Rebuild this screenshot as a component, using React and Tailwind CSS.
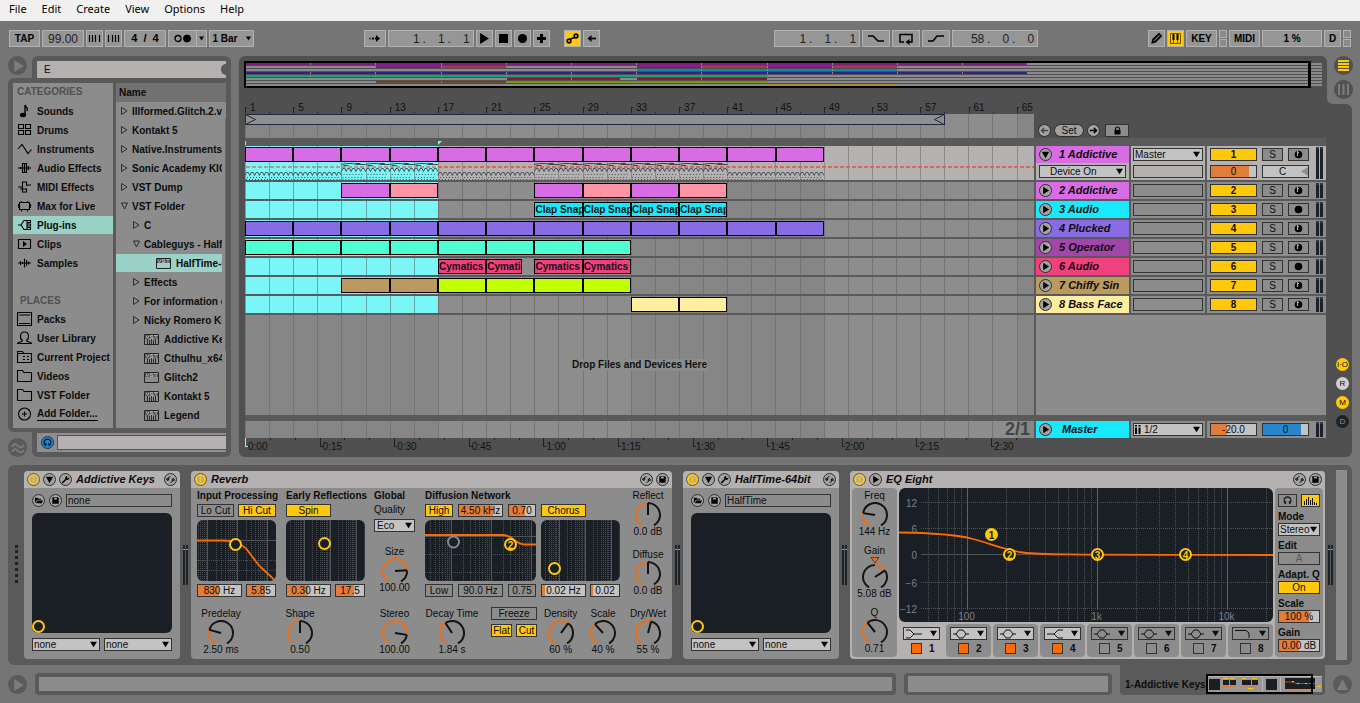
import { clsx } from 'clsx';

const BARS = 65.42;
const OVERVIEW_BARS = 66;

const COLORS = {
  magenta: { clip: '#d86ce4', mini: '#7e1c86' },
  pink: { clip: '#ff94a6', mini: '#a83a42' },
  cyan: { clip: '#19e9ff', mini: '#0a86a8' },
  purple: { clip: '#886ce4', mini: '#32208c' },
  green: { clip: '#4dffd2', mini: '#12a578' },
  red: { clip: '#f23f7e', mini: '#a00c38' },
  brown: { clip: '#bb9a60', mini: '#70451a' },
  lime: { clip: '#bfff00', mini: '#68a010' },
  yellow: { clip: '#ffeda0', mini: '#aa8c38' },
};

// n clips of four bars each, starting at the given bar
const run = (start, n, color, name) =>
  Array.from({ length: n }, (_, i) => ({ start: start + i * 4, len: 4, color, name }));

const TRACKS = [
  { name: '1 Addictive', header: '#d86ce4', open: true, clips: run(1, 12, 'magenta') },
  {
    name: '2 Addictive',
    header: '#d86ce4',
    clips: [
      ...run(9, 1, 'magenta'),
      ...run(13, 1, 'pink'),
      ...run(25, 1, 'magenta'),
      ...run(29, 1, 'pink'),
      ...run(33, 1, 'magenta'),
      ...run(37, 1, 'pink'),
    ],
  },
  { name: '3 Audio', header: '#19e9ff', audio: true, clips: run(25, 4, 'cyan', 'Clap Snap') },
  { name: '4 Plucked', header: '#8a6ce2', clips: run(1, 12, 'purple') },
  { name: '5 Operator', header: '#a346aa', clips: run(1, 8, 'green') },
  {
    name: '6 Audio',
    header: '#f23f7e',
    audio: true,
    clips: [
      ...run(17, 1, 'red', 'Cymatics'),
      { start: 21, len: 3, color: 'red', name: 'Cymatics' },
      ...run(25, 2, 'red', 'Cymatics'),
    ],
  },
  { name: '7 Chiffy Sin', header: '#bb9a60', clips: [...run(9, 2, 'brown'), ...run(17, 4, 'lime')] },
  { name: '8 Bass Face', header: '#ffeda0', clips: run(33, 2, 'yellow') },
];

const pct = (bars, total = BARS) => `${(bars / total) * 100}%`;

// fills the holes between clips so that a lane can be laid out in one row
const withGaps = (clips) => {
  const out = [];
  let at = 1;
  clips.forEach((c) => {
    if (c.start > at) out.push({ gap: true, len: c.start - at });
    out.push(c);
    at = c.start + c.len;
  });
  return out;
};

/* ---------- small controls ---------- */

function Tri({ dir = 'down', className = 'w-2 h-2' }) {
  const d = { down: 'M0 1h10l-5 8z', right: 'M1 0v10l8-5z' }[dir];
  return (
    <svg viewBox="0 0 10 10" className={className} fill="currentColor" aria-hidden="true">
      <path d={d} />
    </svg>
  );
}

function Pill({ on, className, children, ...rest }) {
  return (
    <button
      type="button"
      className={clsx(
        'h-[13px] shrink-0 border border-[#333] flex items-center justify-center leading-none whitespace-nowrap overflow-hidden',
        on ? 'bg-[#ffc80a]' : 'bg-[#8c8c8c]',
        className
      )}
      {...rest}
    >
      {children}
    </button>
  );
}

function Value({ value, fill = 0, label, className, color = '#e07d3a', rest = '#c3c3c3' }) {
  return (
    <input
      type="text"
      aria-label={label}
      defaultValue={value}
      className={clsx('h-[13px] min-w-0 shrink-0 border border-[#333] text-center leading-none outline-none', className)}
      style={{ background: `linear-gradient(to right, ${color} ${fill}%, ${rest} ${fill}%)` }}
    />
  );
}

function Drop({ options, label, className, pad = 'pl-1' }) {
  return (
    <span className={clsx('relative block h-[13px] shrink-0', className)}>
      <select
        aria-label={label}
        className={clsx('appearance-none block w-full h-full border border-[#333] bg-[#c3c3c3] leading-none outline-none', pad)}
      >
        {options.map((o) => (
          <option key={o}>{o}</option>
        ))}
      </select>
      <Tri className="w-[7px] h-[7px] absolute right-[3px] top-[3px] pointer-events-none text-black" />
    </span>
  );
}

function Round({ label, on, children }) {
  return (
    <button
      type="button"
      aria-label={label}
      className={clsx(
        'size-[13px] shrink-0 rounded-full border flex items-center justify-center text-black',
        on ? 'bg-[#ffc80a] border-[#555]' : 'bg-[#a5a2a2] border-[#2c2c2c]'
      )}
    >
      {children}
    </button>
  );
}

function Glyph({ name }) {
  const shapes = {
    power: (
      <>
        <circle cx="6" cy="6" r="3.8" fill="#b3aa98" />
        <path d="M6 3v6" stroke="#ffc80a" strokeWidth="1.6" />
      </>
    ),
    down: <path d="M2 3h8L6 10z" fill="currentColor" />,
    right: <path d="M3.5 2v8L10 6z" fill="currentColor" />,
    wrench: (
      <path d="M1.800 9.200l4-4c-.6-1.800.6-3.400 2.600-3.400L7.300 3.300l1.300 1.300 1.700-1c.3 2-1.500 3.300-3.300 2.700l-3.900 4z" fill="currentColor" />
    ),
    swap: (
      <path
        d="M3 5.500C3.300 3.800 4.500 3 6 3M9 6.500C8.700 8.200 7.500 9 6 9M1.500 5.300h3L3 7.300zM7.500 6.700h3L9 4.700z"
        fill="none"
        stroke="currentColor"
        strokeWidth="1"
      />
    ),
    save: (
      <>
        <path d="M2.500 2.500h6l1 1v6h-7z" fill="currentColor" />
        <path d="M4.500 3h3v2h-3z" fill="#a5a2a2" />
      </>
    ),
    folder: <path d="M2 3h3l1 1h3v1.200H4.200L2.600 8.500H2zM4.600 5.900H11L9.500 9H3.200z" fill="currentColor" />,
    left: <path d="M10 6H3M5.500 3.200L2.800 6l2.700 2.800" fill="none" stroke="#444" strokeWidth="1.5" />,
    next: <path d="M2 6h7M6.500 3.200L9.200 6 6.500 8.800" fill="none" stroke="currentColor" strokeWidth="1.7" />,
  };
  return (
    <svg viewBox="0 0 12 12" className="w-[11px] h-[11px] shrink-0" aria-hidden="true">
      {shapes[name]}
    </svg>
  );
}

const polar = (deg, r) => {
  const a = (deg * Math.PI) / 180;
  return `${(Math.sin(a) * r).toFixed(2)} ${(-Math.cos(a) * r).toFixed(2)}`;
};

const arc = (from, to, r) => `M${polar(from, r)}A${r} ${r} 0 ${to - from > 180 ? 1 : 0} 1 ${polar(to, r)}`;

function Knob({ label, value, at, bipolar }) {
  const deg = -150 + at * 300;
  return (
    <label className="flex flex-col items-center whitespace-nowrap">
      <span className="leading-3">{label}</span>
      {bipolar && (
        <svg viewBox="0 0 10 7" className="w-[10px] h-[7px]" aria-hidden="true">
          <path d="M1 .5h8L5 6z" fill="#ff6a00" stroke="#333" strokeWidth=".8" />
        </svg>
      )}
      <span className="relative block">
        <svg viewBox="-13 -13 26 24" className="block w-[26px] h-6" fill="none" strokeWidth="2" aria-hidden="true">
          <path d={arc(deg, 150, 12)} stroke="#151515" />
          {bipolar && <path d={arc(-150, 0, 12)} stroke="#151515" />}
          <path d={arc(bipolar ? 0 : -150, deg, 12)} stroke="#e8701a" />
          <path d={`M0 0L${polar(deg, 12)}`} stroke="#111" />
        </svg>
        <input
          type="range"
          min="0"
          max="100"
          defaultValue={at * 100}
          aria-label={label}
          className="absolute inset-0 w-full h-full opacity-0"
        />
      </span>
      <span className="leading-3">{value}</span>
    </label>
  );
}

/* ---------- transport ---------- */

const CTL = 'h-[17px] shrink-0 border border-[#b2b2b2] bg-[#969696] flex items-center justify-center font-bold text-black leading-none';

function Ctl({ className, children, ...rest }) {
  return (
    <button type="button" className={clsx(CTL, className)} {...rest}>
      {children}
    </button>
  );
}

function Icon({ w = 17, h = 15, children }) {
  return (
    <svg width={w} height={h} viewBox={`0 0 ${w} ${h}`} fill="none" stroke="#000" aria-hidden="true" className="shrink-0">
      {children}
    </svg>
  );
}

function Position({ label, parts }) {
  return (
    <div className="h-[17px] w-[86px] shrink-0 border border-[#b2b2b2] bg-[#969696] flex items-center justify-end pr-[3px] text-xs text-[#222]">
      {parts.map((p, i) => (
        <span key={i} className="flex items-center">
          <input type="text" aria-label={`${label} ${i + 1}`} defaultValue={p} className="w-4 h-[15px] text-right outline-none" />
          {i < 2 && <span className="w-[9px] text-center">.</span>}
        </span>
      ))}
    </div>
  );
}

function MidiLights() {
  return (
    <span className="flex flex-col gap-px shrink-0">
      <i className="block size-2 border border-[#b2b2b2] bg-[#8a8a8a]" />
      <i className="block size-2 border border-[#b2b2b2] bg-[#8a8a8a]" />
    </span>
  );
}

function Transport() {
  return (
    <div className="h-[35px] shrink-0 flex items-center px-[9px]">
      <div className="flex gap-0.5">
        <Ctl className="w-[31px]">TAP</Ctl>
        <input
          type="text"
          aria-label="Tempo"
          defaultValue="99.00"
          className="h-[17px] w-[42px] border border-[#b2b2b2] bg-[#969696] text-xs text-center text-[#222] outline-none"
        />
        <Ctl className="w-[17px]" aria-label="Nudge down">
          <Icon><path d="M3.500 4v7M6.500 4v7M9.500 4v7M13.500 4v7" strokeWidth="1.2" /></Icon>
        </Ctl>
        <Ctl className="w-[17px]" aria-label="Nudge up">
          <Icon><path d="M3.500 4v7M7.500 4v7M10.500 4v7M13.500 4v7" strokeWidth="1.2" /></Icon>
        </Ctl>
        <Ctl className="w-[42px] gap-1.5 text-[11px]">
          <span>4</span>
          <span>/</span>
          <span>4</span>
        </Ctl>
        <div className="flex">
          <Ctl className="w-[29px]" aria-label="Metronome">
            <Icon w={20}>
              <circle cx="5" cy="7.5" r="3" strokeWidth="1.3" />
              <circle cx="14" cy="7.5" r="3.5" fill="#000" />
            </Icon>
          </Ctl>
          <Ctl className="w-[10px] border-l-0" aria-label="Metronome settings"><Tri className="w-[5px] h-[5px]" /></Ctl>
        </div>
        <Ctl className="w-[45px] gap-2">1 Bar <Tri className="w-[5px] h-[5px]" /></Ctl>
      </div>

      <div className="flex-[110]" />

      <div className="flex gap-0.5">
        <Ctl className="w-[22px]" aria-label="Follow">
          <Icon w={16}>
            <path d="M2 7.500h2" stroke="#444" strokeWidth="2" />
            <path d="M5 7.500h5" strokeWidth="2" strokeDasharray="2 1" />
            <path d="M9 4v7l4-3.500z" fill="#000" stroke="none" />
          </Icon>
        </Ctl>
        <Position label="Position" parts={['1', '1', '1']} />
        <Ctl className="w-[17px]" aria-label="Play"><Tri dir="right" className="w-[11px] h-[11px]" /></Ctl>
        <Ctl className="w-[17px]" aria-label="Stop"><i className="block size-[9px] bg-black" /></Ctl>
        <Ctl className="w-[17px]" aria-label="Record"><i className="block size-[9px] rounded-full bg-black" /></Ctl>
        <Ctl className="w-[17px]" aria-label="Overdub">
          <Icon w={15}><path d="M7.500 3v9M3 7.500h9" strokeWidth="3" /></Icon>
        </Ctl>
        <button type="button" aria-label="Automation arm" className="ml-3 h-[17px] w-[17px] border border-[#b2b2b2] bg-[#ffc80a]">
          <Icon w={15}>
            <circle cx="4" cy="10" r="1.8" strokeWidth="1.7" />
            <circle cx="11" cy="5" r="1.8" strokeWidth="1.7" />
            <path d="M5.500 8l4-1.500" strokeWidth="1.7" />
          </Icon>
        </button>
        <Ctl className="w-[17px]" aria-label="Back to arrangement">
          <Icon w={15}>
            <path d="M12 7.500H6" strokeWidth="1.7" />
            <path d="M7.500 4v7L3.500 7.500z" fill="#000" stroke="none" />
          </Icon>
        </Ctl>
      </div>

      <div className="flex-[175]" />

      <div className="flex gap-0.5">
        <Position label="Loop start" parts={['1', '1', '1']} />
        <Ctl className="w-7" aria-label="Punch in">
          <Icon w={18}><path d="M1 5h5l5 5h6" strokeWidth="1.6" /></Icon>
        </Ctl>
        <Ctl className="w-7" aria-label="Loop">
          <Icon w={18}>
            <path d="M7 11H3V3.500h12V11h-4" strokeWidth="1.5" />
            <path d="M12.500 8v6L8.500 11z" fill="#000" stroke="none" />
          </Icon>
        </Ctl>
        <Ctl className="w-7" aria-label="Punch out">
          <Icon w={18}><path d="M1 10h5l4-5h7" strokeWidth="1.6" /></Icon>
        </Ctl>
        <Position label="Loop length" parts={['58', '0', '0']} />
      </div>

      <div className="flex-[110]" />

      <div className="flex gap-0.5">
        <Ctl className="w-[17px]" aria-label="Draw mode">
          <Icon w={15}>
            <path d="M3 12l1-4 6-5.500 2.500 2.500-6 6z" strokeWidth="1.2" fill="#222" />
            <path d="M5.500 9.500l5-5" stroke="#969696" strokeWidth=".8" />
          </Icon>
        </Ctl>
        <button type="button" aria-label="Computer keyboard" className="h-[17px] w-[17px] border border-[#b2b2b2] bg-[#ffc80a]">
          <Icon w={15}>
            <path d="M2.500 2.500h10v10h-10zM5.500 8v4M9.500 8v4" stroke="#6d5600" />
            <path d="M5.500 3v6M9.500 3v6" strokeWidth="2" />
          </Icon>
        </button>
        <Ctl className="w-[31px]">KEY</Ctl>
        <MidiLights />
        <Ctl className="w-[31px]">MIDI</Ctl>
        <div className={clsx(CTL, 'w-[60px]')}>1 %</div>
        <div className={clsx(CTL, 'w-[17px]')}>D</div>
        <MidiLights />
      </div>
    </div>
  );
}

/* ---------- browser ---------- */

const CATEGORIES = ['Sounds', 'Drums', 'Instruments', 'Audio Effects', 'MIDI Effects', 'Max for Live', 'Plug-ins', 'Clips', 'Samples'];
const PLACES = ['Packs', 'User Library', 'Current Project', 'Videos', 'VST Folder', 'Add Folder...'];

const FOLDER = 'M1.500 2.500v11h14v-9h-7.500l-1.500-2z';

const BROWSER_ICONS = {
  Sounds: (
    <>
      <ellipse cx="7" cy="12" rx="2.5" ry="1.8" fill="#000" />
      <path d="M9 12V2c1 3 4 3 2 6" strokeWidth="1.4" />
    </>
  ),
  Drums: <path d="M2.500 2.500h5v4h-5zM9.500 2.500h5v4h-5zM2.500 8.500h5v4h-5zM9.500 8.500h5v4h-5z" />,
  Instruments: <path d="M2 8l4-4.500 6 9 3.500-4" />,
  'Audio Effects': <path d="M2 8h13M4.500 7v2M6.500 5v6M8.500 4v8M10.500 5v6M12.500 6v4M6.500 5V3.500h4V5M6.500 11v1.500h4V11" />,
  'MIDI Effects': <path d="M2 8h5M10 6h5M4 10h7M10.500 9.500v3.500h-4V3h4v4" />,
  'Max for Live': <path d="M3.500 4.500h10v7h-10zM2.500 6v4M14.500 6v4M5.500 11.500v2M11.500 11.500v2M5.500 3v1.500M11.500 3v1.500" />,
  'Plug-ins': <path d="M2 8h3l3-4.500h3v9H8L5 8M11.500 3.500h3v2h-3M11.500 7h3v2h-3M11.500 10.500h3v2h-3" />,
  Clips: (
    <>
      <path d="M2.500 3.500h12v9h-12z" />
      <path d="M7 5v6l4-3z" fill="#000" stroke="none" />
    </>
  ),
  Samples: <path d="M2 8h13M4.500 6v4M6.500 7v2M8.500 3.500v9M10.500 5v6M12.500 6.500v3" />,
  Packs: <path d="M1.500 1.500h14v13h-14zM3 4h11M3 12.500h11" />,
  'User Library': <path d="M1.500 13.500c0-2 5-1 5-3-3-2-3-8.500 2-8.500s5 6.500 2 8.500c0 2 5 1 5 3z" />,
  'Current Project': <path d={`${FOLDER}M7 7.500h2M11 7.500h2M7 10.500h2M11 10.500h2M1.500 4.500h7`} />,
  Videos: <path d={FOLDER} />,
  'VST Folder': <path d={FOLDER} />,
  'Add Folder...': <path d="M8.500 2a6 6 0 100 12 6 6 0 000-12zM6 8h5M8.500 5.500v5" />,
};

function SideItem({ name, active }) {
  return (
    <li>
      <button
        type="button"
        className={clsx('h-[18px] mb-px w-full flex items-center gap-1 pl-[3px] text-left font-bold', active && 'bg-[#9ad2c8]')}
      >
        <svg viewBox="0 0 17 16" className="w-[17px] h-4 shrink-0" fill="none" stroke="#000" strokeWidth="1.1" aria-hidden="true">
          {BROWSER_ICONS[name]}
        </svg>
        <span className={clsx('whitespace-nowrap', name === 'Add Folder...' && 'border-b border-black leading-3')}>{name}</span>
      </button>
    </li>
  );
}

const FILES = [
  { name: 'Illformed.Glitch.2.v2', kind: 'closed', depth: 0 },
  { name: 'Kontakt 5', kind: 'closed', depth: 0 },
  { name: 'Native.Instruments.K', kind: 'closed', depth: 0 },
  { name: 'Sonic Academy KICK', kind: 'closed', depth: 0 },
  { name: 'VST Dump', kind: 'closed', depth: 0 },
  { name: 'VST Folder', kind: 'open', depth: 0 },
  { name: 'C', kind: 'closed', depth: 1 },
  { name: 'Cableguys - HalfTime', kind: 'open', depth: 1 },
  { name: 'HalfTime-64bit', kind: 'vst', depth: 3, active: true },
  { name: 'Effects', kind: 'closed', depth: 1 },
  { name: 'For information on', kind: 'closed', depth: 1 },
  { name: 'Nicky Romero Kick', kind: 'closed', depth: 1 },
  { name: 'Addictive Keys', kind: 'vsti', depth: 2 },
  { name: 'Cthulhu_x64', kind: 'vsti', depth: 2 },
  { name: 'Glitch2', kind: 'vst', depth: 2 },
  { name: 'Kontakt 5', kind: 'vsti', depth: 2 },
  { name: 'Legend', kind: 'vsti', depth: 2 },
];

const INDENT = ['pl-[5px] gap-1', 'pl-[17px] gap-1', 'pl-[28px] gap-[5px]', 'pl-[40px] gap-[5px]'];

function FileIcon({ kind }) {
  if (kind === 'closed' || kind === 'open') {
    return (
      <svg viewBox="0 0 7 8" className="w-[7px] h-2 shrink-0" fill="none" stroke="#222" strokeWidth=".9" aria-hidden="true">
        <path d={kind === 'closed' ? 'M.5.5v7L6 4z' : 'M.5 1h6L3.500 7z'} />
      </svg>
    );
  }
  return (
    <svg viewBox="0 0 15 11" className="w-[15px] h-[11px] shrink-0" fill="none" stroke="#222" aria-hidden="true">
      <path d="M.5.5h14v10H.5z" />
      <path d="M1 1h13v4H1z" fill="#555" stroke="none" />
      <path d="M2 1.500l1.500 3L5 1.500M9 1.500H6.500V3H9v1.500H6M10 1.500h4M12 1.500v3.500" strokeWidth=".9" stroke="#b0b0b0" />
      {kind === 'vsti' && <path d="M3.500 5v5M5.500 6v4M7.500 5v5M9.500 6v4M11.500 5v5" strokeWidth=".9" />}
    </svg>
  );
}

function Browser() {
  return (
    <aside className="w-[223px] shrink-0 flex flex-col">
      <div className="flex h-[22px]">
        <div className="w-6 shrink-0">
          <button type="button" aria-label="Hide browser" className="size-[19px] rounded-full bg-[#5a5a5a] text-[#7c7c7c] flex items-center justify-center">
            <Tri dir="right" className="w-3 h-3 ml-0.5" />
          </button>
        </div>
        <div className="flex-1 bg-[#5a5a5a] rounded-t-md pt-[5px] px-[5px] relative overflow-hidden">
          <input type="text" aria-label="Search" defaultValue="E" className="block w-full h-[17px] bg-[#b5b1b0] px-[7px] outline-none" />
          <span className="absolute right-[5px] top-[8px] w-[5px] h-[11px] rounded-l-full bg-[#5a5a5a]" />
        </div>
      </div>

      <div className="flex-1 bg-[#5a5a5a] rounded-l-md pl-[5px] pr-[5px] pt-[5px] pb-1 flex gap-[3px]">
        <nav className="w-[100px] shrink-0 bg-[#8c8c8c]">
          <h2 className="h-[19px] pl-1 leading-[18px] font-bold text-[#505050]">CATEGORIES</h2>
          <ul>
            {CATEGORIES.map((c) => (
              <SideItem key={c} name={c} active={c === 'Plug-ins'} />
            ))}
          </ul>
          <h2 className="h-[19px] mt-[19px] pl-[7px] leading-[19px] font-bold text-[#505050]">PLACES</h2>
          <ul>
            {PLACES.map((p) => (
              <SideItem key={p} name={p} />
            ))}
          </ul>
        </nav>
        <div className="flex-1 min-w-0 bg-[#8c8c8c]">
          <h2 className="h-[19px] pl-[3px] leading-[19px] font-bold bg-[#73716f]">Name</h2>
          <div className="flex">
            <ul className="flex-1 min-w-0 overflow-hidden">
              {FILES.map((f, i) => (
                <li key={i}>
                  <button
                    type="button"
                    className={clsx('h-[18px] mb-px w-full flex items-center text-left font-bold whitespace-nowrap overflow-hidden', INDENT[f.depth], f.active && 'bg-[#9ad2c8]')}
                  >
                    <FileIcon kind={f.kind} />
                    {f.name}
                  </button>
                </li>
              ))}
            </ul>
            <div className="w-1 flex justify-end pt-4">
              <i className="block w-px h-[233px] bg-[#6a6a6a]" />
            </div>
          </div>
        </div>
      </div>

      <div className="flex h-[25px]">
        <div className="w-6 shrink-0 pt-[6px]">
          <button type="button" aria-label="Groove pool" className="size-[19px] rounded-full bg-[#5a5a5a] flex items-center justify-center">
            <svg viewBox="0 0 14 12" className="w-[14px] h-3" fill="none" stroke="#7c7c7c" strokeWidth="1.8" aria-hidden="true">
              <path d="M1 5c2-4 4-3 6-1s4 2 6-1M1 10c2-4 4-3 6-1s4 2 6-1" />
            </svg>
          </button>
        </div>
        <div className="flex-1 bg-[#5a5a5a] rounded-b-md pt-px px-[5px] pb-[5px]">
          <div className="h-[19px] bg-[#8e8e8e] flex items-center gap-[3px] pl-1">
            <button type="button" aria-label="Preview" className="size-[13px] rounded-full bg-[#2a86cc] border border-[#123a5a]">
              <svg viewBox="0 0 11 11" className="size-[11px]" fill="none" stroke="#0d1c2a" strokeWidth="1.3" aria-hidden="true">
                <path d="M3.500 8.500C1 6 2 2.200 5.500 2.200S10 6 7.500 8.500M4 6v3M7 6v3" />
              </svg>
            </button>
            <div className="flex-1 h-[15px] border border-r-0 border-[#555] bg-[#b5b1b0]" />
          </div>
        </div>
      </div>
    </aside>
  );
}

/* ---------- arrangement ---------- */

function Grid({ selected, light }) {
  return (
    <div className="flex overflow-hidden min-w-0">
      {Array.from({ length: 33 }, (_, i) => {
        const shade = Math.floor(i / 8) % 2 ? '#8d8d8d' : '#868686';
        const on = selected && i < 8;
        return (
          <div
            key={i}
            className={clsx('shrink-0 border-l', on ? 'border-[#62a9a9]' : light ? 'border-[#8c8988]' : 'border-[#747474]')}
            style={{ width: pct(2), background: on ? '#7af6f6' : light ? '#b5b1b0' : shade }}
          />
        );
      })}
    </div>
  );
}

function Clips({ clips }) {
  return (
    <div className="flex h-[15px] mt-px min-w-0 overflow-hidden">
      {withGaps(clips).map((c, i) =>
        c.gap ? (
          <div key={i} className="shrink-0" style={{ width: pct(c.len) }} />
        ) : (
          <div
            key={i}
            className="shrink-0 h-[15px] border border-black font-bold leading-[13px] overflow-hidden whitespace-nowrap text-[#111]"
            style={{ width: pct(c.len), background: COLORS[c.color].clip }}
          >
            {c.name}
          </div>
        )
      )}
    </div>
  );
}

function Automation() {
  const bar = 12.06;
  const waves = [];
  const dots = [];
  const tops = [];
  for (let b = 0; b < 48; b += 2) {
    const x = b * bar;
    const busy = (b >= 8 && b < 16) || (b >= 24 && b < 40);
    waves.push(`M${x} ${busy ? 9.5 : 13.5}${'l1.400 -3h2l1.400 3'.repeat(5)}`);
    dots.push(`M${x + 1} 17.500h23`);
    dots.push(busy ? `M${x + 2} 12.500h20M${x + 1} 15.500h20` : `M${x + 2} 15.500h20`);
    if (busy) tops.push(`M${x} 2.500l5-1h6l4 1h9M${x + 2} 3.500h5M${x + 14} 1.500h5`);
  }
  return (
    <svg viewBox="0 0 789 18" preserveAspectRatio="none" className="block w-full h-[18px]" fill="none" aria-hidden="true">
      <path d="M1 5h192" stroke="#b8958f" strokeWidth="2" strokeDasharray="4 2" />
      <path d="M193 5h596" stroke="#d5675f" strokeWidth="2" strokeDasharray="4 2" />
      <path d={waves.join('')} stroke="#45525c" strokeWidth="1" />
      <path d={tops.join('')} stroke="#3c4650" strokeWidth="1" />
      <path d={dots.join('')} stroke="#45525c" strokeWidth="1" strokeDasharray="1 2" />
    </svg>
  );
}

function Meter() {
  return (
    <span className="flex gap-px self-stretch py-px ml-[7px]">
      <i className="block w-[3px] bg-[#1b2229] border-t-2 border-[#333c44]" />
      <i className="block w-[3px] bg-[#1b2229] border-t-2 border-[#333c44]" />
    </span>
  );
}

function TrackRow({ track, n }) {
  const bg = track.open ? 'bg-[#b5b1b0]' : 'bg-[#8c8c8c]';
  return (
    <div className="flex gap-0.5">
      <div className="flex-1 min-w-0 grid *:col-start-1 *:row-start-1">
        <Grid selected light={track.open} />
        <div className="min-w-0">
          <Clips clips={track.clips} />
          {track.open && <Automation />}
        </div>
      </div>
      <div className={clsx('w-[93px] shrink-0', bg)}>
        <div className="h-[17px] flex items-center gap-[7px] pl-[3px] text-[11px] font-bold italic" style={{ background: track.header }}>
          <Round label={track.open ? 'Fold track' : 'Unfold track'}>
            <Glyph name={track.open ? 'down' : 'right'} />
          </Round>
          <span className="whitespace-nowrap">{track.name}</span>
        </div>
        {track.open && <Drop className="mt-0.5 mx-[3px]" label="Automation device" options={['Device On']} pad="pl-[10px]" />}
      </div>
      <div className={clsx('w-[74px] shrink-0 px-0.5 py-0.5 flex flex-col gap-1', bg)}>
        {track.open ? (
          <>
            <Drop label="Output" options={['Master']} pad="pl-px" />
            <div className="h-[13px] border border-[#333] bg-[#b5b1b0]" />
          </>
        ) : (
          <div className="h-[13px] border border-[#333]" />
        )}
      </div>
      <div className={clsx('w-[119px] shrink-0 flex pl-[3px]', bg)}>
        <div className="flex flex-col gap-1 py-0.5">
          <div className="flex gap-[5px]">
            <Pill on className="w-[47px] font-bold">{n}</Pill>
            <Pill className="w-[21px]">S</Pill>
            <Pill className="w-[21px]" aria-label="Arm">
              <svg viewBox="0 0 9 9" className="size-[9px]" aria-hidden="true">
                <circle cx="4.5" cy="4.5" r="3.8" />
                {!track.audio && <path d="M3.500 1v5M3.500 2.500h1.500" stroke="#aaa" strokeWidth="1.2" />}
              </svg>
            </Pill>
          </div>
          {track.open && (
            <div className="flex gap-[5px]">
              <Value label="Volume" value="0" fill={84} className="w-[47px]" />
              <span className="relative block h-[13px]">
                <Value label="Pan" value="C" className="block w-[47px] pr-1.5" />
                <svg viewBox="0 0 7 9" className="absolute right-px top-0.5 w-[7px] h-[9px] pointer-events-none" aria-hidden="true">
                  <path d="M7 0v9L0 4.500z" fill="#8f8f8f" />
                </svg>
              </span>
            </div>
          )}
        </div>
        <Meter />
      </div>
    </div>
  );
}

function Overview() {
  return (
    <div className="relative h-[27px] -ml-px mr-1">
      <div className="h-full p-0.5 pr-0 flex flex-col gap-px">
        {TRACKS.map((t) => (
          <div key={t.name} className="h-0.5 flex bg-[#8a8a8a]">
            {withGaps(t.clips).map((c, i) => (
              <div
                key={i}
                className={clsx('shrink-0 h-0.5', !c.gap && 'border-r border-[#8a8a8a]')}
                style={{ width: pct(c.len, OVERVIEW_BARS), background: c.gap ? undefined : COLORS[c.color].mini }}
              />
            ))}
          </div>
        ))}
      </div>
      <div className="absolute inset-y-0 left-0 right-[11px] border-2 border-r-[3px] border-black" />
    </div>
  );
}

function BarRuler() {
  return (
    <div className="h-[26px] flex items-end overflow-hidden text-[#111]">
      {Array.from({ length: 17 }, (_, i) => (
        <div key={i} className="shrink-0 flex items-end" style={{ width: pct(4) }}>
          <div className="w-1/2 h-3 relative">
            <i className="absolute left-0 bottom-px w-[2px] h-[6px] border-l border-t border-[#222]" />
            <span className="block pl-[5px] leading-3">{i * 4 + 1}</span>
          </div>
          <i className="block w-px h-px mb-px bg-[#222]" />
        </div>
      ))}
    </div>
  );
}

const TIMES = ['0:00', '0:15', '0:30', '0:45', '1:00', '1:15', '1:30', '1:45', '2:00', '2:15', '2:30'];

function TimeRuler() {
  return (
    <div className="h-[19px] flex overflow-hidden text-[#111]">
      {TIMES.map((t, i) => (
        <div key={t} className="shrink-0 flex" style={{ width: pct(6.1875) }}>
          <div className="w-1/3 flex">
            <i className={clsx('block w-[3px] h-[9px] border-l border-b', i === 0 ? 'border-[#7af6f6]' : 'border-[#222]')} />
            <span className="leading-3 pt-[3px] whitespace-nowrap">{t}</span>
          </div>
          <i className="block w-1/3 h-0.5 border-l border-[#222]" />
          <i className="block w-1/3 h-0.5 border-l border-[#222]" />
        </div>
      ))}
    </div>
  );
}

function ViewToggle({ children, className }) {
  return (
    <button type="button" className={clsx('size-[13px] rounded-full text-[8px] leading-none flex items-center justify-center', className)}>
      {children}
    </button>
  );
}

function Arrangement() {
  return (
    <main className="flex-1 min-w-0 flex">
      <section className="flex-1 min-w-0 flex flex-col bg-[#505050] rounded-l-md rounded-tr-md pt-[5px] pl-1.5 pr-px">
        <Overview />
        <div className="flex gap-0.5">
          <div className="flex-1 min-w-0">
            <BarRuler />
            <div className="grid *:col-start-1 *:row-start-1 h-6">
              <Grid />
              <div className="h-[11px] border border-[#22263a] bg-[#8f8f8f] flex items-center justify-between" style={{ width: pct(58) }}>
                <svg viewBox="0 0 10 9" className="w-[10px] h-[9px]" fill="none" stroke="#22263a" aria-hidden="true"><path d="M.5 0l9 4.500-9 4.500" /></svg>
                <svg viewBox="0 0 10 9" className="w-[10px] h-[9px]" fill="none" stroke="#22263a" aria-hidden="true"><path d="M9.500 0l-9 4.500 9 4.500" /></svg>
              </div>
            </div>
          </div>
          <div className="w-[290px] shrink-0 flex items-end gap-[3px] pl-0.5 pb-px">
            <Round label="Previous locator"><Glyph name="left" /></Round>
            <button type="button" className="h-[13px] w-[30px] rounded-full border border-[#2c2c2c] bg-[#a0a0a0] leading-none">Set</button>
            <Round label="Next locator"><Glyph name="next" /></Round>
            <Pill className="w-6 ml-0.5" aria-label="Lock envelopes">
              <svg viewBox="0 0 9 9" className="size-[9px]" fill="none" stroke="#000" aria-hidden="true">
                <path d="M2.500 4.500V3a2 2 0 014 0v1.500" strokeWidth="1.2" />
                <path d="M1.500 4h6v4.500h-6z" fill="#000" stroke="none" />
              </svg>
            </Pill>
          </div>
        </div>

        <div className="bg-[#5a5a5a] flex-1 flex flex-col">
          <div className="flex h-2 items-end pb-px">
            <div className="h-1 flex-1 flex min-w-0 mr-[292px]">
              <i className="block shrink-0 h-1 border-l border-[#7af6f6]" style={{ width: pct(16) }} />
              <svg viewBox="0 0 4 4" className="size-1" aria-hidden="true"><path d="M0 0h4L0 4z" fill="#7af6f6" /></svg>
            </div>
          </div>
          <div className="flex-1 flex flex-col gap-0.5">
            {TRACKS.map((t, i) => (
              <TrackRow key={t.name} track={t} n={i + 1} />
            ))}
            <div className="flex-1 min-h-[100px] flex gap-0.5">
              <div className="flex-1 min-w-0 grid *:col-start-1 *:row-start-1">
                <Grid />
                <p className="place-self-center bg-[#8d8d8d] font-bold leading-3 text-[#111]">Drop Files and Devices Here</p>
              </div>
              <div className="w-[290px] shrink-0 bg-[#8c8c8c]" />
            </div>
          </div>

          <div className="mt-1.5 flex gap-0.5">
            <div className="flex-1 min-w-0 h-[17px] grid *:col-start-1 *:row-start-1">
              <Grid />
              <span className="justify-self-end pr-1 text-lg leading-[17px] font-bold text-[#444]">2/1</span>
            </div>
            <div className="w-[93px] shrink-0 bg-[#19e9ff] flex items-center gap-[10px] pl-[3px] text-[11px] font-bold italic">
              <Round label="Unfold master"><Glyph name="right" /></Round>
              Master
            </div>
            <div className="w-[74px] shrink-0 p-0.5 bg-[#8c8c8c] relative">
              <Drop label="Master output" options={['1/2']} pad="pl-[10px]" />
              <svg viewBox="0 0 6 9" className="absolute left-1 top-1 w-1.5 h-[9px] pointer-events-none" aria-hidden="true">
                <path d="M0 0h2v1.500H0zM3.500 0h2v1.500h-2zM0 2.500h2V9H0zM3.500 2.500h2V9h-2z" />
              </svg>
            </div>
            <div className="w-[119px] shrink-0 pl-[3px] bg-[#8c8c8c] flex items-center">
              <Value label="Master volume" value="-20.0" fill={35} className="w-[47px] mr-[5px]" />
              <Value label="Cue volume" value="0" fill={84} color="#2a86cc" className="w-[47px]" />
              <Meter />
            </div>
          </div>
        </div>
        <div className="mr-[292px]"><TimeRuler /></div>
      </section>

      <div className="w-[25px] shrink-0 flex flex-col">
        <div className="bg-[#505050]">
          <div className="h-12 bg-[#757575] rounded-bl-md pl-[7px] flex flex-col gap-[5px]">
            <button type="button" aria-label="Arrangement view" className="size-[19px] shrink-0 rounded-full bg-[#505050] flex items-center justify-center">
              <svg viewBox="0 0 11 11" className="size-[11px]" stroke="#ffc80a" strokeWidth="2" aria-hidden="true"><path d="M0 1h11M0 4h11M0 7h11M0 10h11" /></svg>
            </button>
            <button type="button" aria-label="Session view" className="size-[19px] shrink-0 rounded-full bg-[#505050] flex items-center justify-center">
              <svg viewBox="0 0 11 11" className="size-[11px]" stroke="#7c7c7c" strokeWidth="2" aria-hidden="true"><path d="M1 0v11M5.500 0v11M10 0v11" /></svg>
            </button>
          </div>
        </div>
        <div className="flex-1 bg-[#505050] rounded-r-md flex flex-col items-center justify-end gap-1.5 pb-[29px] pl-[6px]">
          <ViewToggle className="bg-[#ffc80a]">I·O</ViewToggle>
          <ViewToggle className="bg-[#d0d0d0]">R</ViewToggle>
          <ViewToggle className="bg-[#ffc80a]">M</ViewToggle>
          <ViewToggle className="bg-[#1b2229] text-[#8c8c8c]">D</ViewToggle>
        </div>
      </div>
    </main>
  );
}

/* ---------- devices ---------- */

function DeviceHeader({ title, icons, right }) {
  return (
    <header className="h-[17px] px-[3px] flex items-center gap-[3px] bg-[#b5b1b0] rounded-t">
      <Round label={`${title} on`} on><Glyph name="power" /></Round>
      {icons.map((g) => (
        <Round key={g} label={g}><Glyph name={g} /></Round>
      ))}
      <h3 className="flex-1 pl-px text-[11px] font-bold italic whitespace-nowrap">{title}</h3>
      {right.map((g) => (
        <Round key={g} label={g}><Glyph name={g} /></Round>
      ))}
    </header>
  );
}

function ChainMeter() {
  return (
    <div className="w-[11px] shrink-0 flex justify-center gap-px pt-[74px]">
      {[0, 1].map((i) => (
        <i key={i} className="w-0.5 h-10 flex flex-col pt-1 bg-[#1b2229]">
          <b className="block h-px bg-[#9a9a9a]" />
        </i>
      ))}
    </div>
  );
}

function PluginDevice({ title, preset }) {
  return (
    <section className="w-[156px] h-[188px] shrink-0 bg-[#8c8c8c] rounded">
      <DeviceHeader title={title} icons={['down', 'wrench']} right={['swap']} />
      <div className="px-2 pt-1.5">
        <div className="flex items-center gap-1">
          <Round label="Load preset"><Glyph name="folder" /></Round>
          <Round label="Save preset"><Glyph name="save" /></Round>
          <input type="text" aria-label="Preset" defaultValue={preset} className="flex-1 min-w-0 h-[13px] border border-[#333] pl-px leading-none outline-none" />
        </div>
        <div className="mt-1.5 h-[120px] rounded-md bg-[#1a1f26] flex items-end">
          <i className="block size-[13px] rounded-full border-2 border-[#ffc80a]" />
        </div>
        <div className="mt-[5px] flex gap-1">
          <Drop className="flex-1" label="X parameter" options={['none']} pad="pl-px" />
          <Drop className="flex-1" label="Y parameter" options={['none']} pad="pl-px" />
        </div>
      </div>
    </section>
  );
}

function Node({ x, y, n, solid, color = '#ffc80a' }) {
  return (
    <g>
      <circle cx={x} cy={y} r="5.5" fill={solid ? color : '#1a1f26'} stroke={color} strokeWidth="2" />
      {n && (
        <text x={x} y={y + 4} textAnchor="middle" fontSize="10" fontWeight="bold" fill={solid ? '#1a1f26' : color}>
          {n}
        </text>
      )}
    </g>
  );
}

function FilterChart({ w, solids, pitch, rows = [], solidRow, curve, children }) {
  const minor = [];
  [solids[0] - pitch, ...solids].forEach((s) => {
    for (let k = 2; k < 10; k++) {
      const x = Math.round(s + pitch * Math.log10(k));
      if (x > 0 && x < w) minor.push(x);
    }
  });
  return (
    <svg viewBox={`0 0 ${w} 61`} width={w} height="61" className="block mt-[3px] rounded-md bg-[#1a1f26] shrink-0" fill="none" aria-hidden="true">
      <path d={minor.map((x) => `M${x + 0.5} 0v61`).join('')} stroke="#4a4e53" strokeDasharray="1 1" />
      <path d={rows.map((y) => `M0 ${y + 0.5}h${w}`).join('')} stroke="#4a4e53" strokeDasharray="1 1" />
      <path d={solids.map((x) => `M${x + 0.5} 0v61`).join('')} stroke="#50555a" />
      {solidRow && <path d={`M0 ${solidRow + 0.5}h${w}`} stroke="#50555a" />}
      {curve && <path d={curve} stroke="#ff6a00" strokeWidth="1.8" />}
      {children}
    </svg>
  );
}

function Reverb() {
  return (
    <section className="w-[481px] h-[188px] shrink-0 bg-[#8c8c8c] rounded">
      <DeviceHeader title="Reverb" icons={[]} right={['swap', 'save']} />
      <div className="flex pl-1.5 pt-0.5 pr-0.5">
        <div className="w-[79px] shrink-0">
          <h4 className="font-bold leading-3 whitespace-nowrap">Input Processing</h4>
          <div className="mt-0.5 flex justify-between">
            <Pill className="w-[37px]">Lo Cut</Pill>
            <Pill on className="w-[38px]">Hi Cut</Pill>
          </div>
          <FilterChart w={79} solids={[10, 40, 70]} pitch={30} rows={[40, 50]} solidRow={20} curve="M0 20.500h26c14 0 17 3 23 8l13 17 15 14">
            <Node x={38.5} y={24.5} />
          </FilterChart>
          <div className="mt-[3px] flex justify-between">
            <Value label="Input frequency" value="830 Hz" fill={50} className="w-[45px]" />
            <Value label="Input width" value="5.85" fill={63} className="w-[30px]" />
          </div>
          <div className="mt-[11px] w-12"><Knob label="Predelay" value="2.50 ms" at={0.25} /></div>
        </div>

        <div className="w-[79px] shrink-0 ml-[10px]">
          <h4 className="font-bold leading-3 whitespace-nowrap">Early Reflections</h4>
          <div className="mt-0.5"><Pill on className="w-[45px]">Spin</Pill></div>
          <FilterChart w={79} solids={[18, 44, 70]} pitch={26}>
            <Node x={38.5} y={23.5} />
          </FilterChart>
          <div className="mt-[3px] flex justify-between">
            <Value label="Spin rate" value="0.30 Hz" fill={48} className="w-[45px]" />
            <Value label="Spin amount" value="17.5" fill={63} className="w-[30px]" />
          </div>
          <div className="mt-[11px] w-7"><Knob label="Shape" value="0.50" at={0.5} /></div>
        </div>

        <div className="w-[41px] shrink-0 ml-[9px]">
          <h4 className="font-bold leading-3">Global</h4>
          <label className="block">
            <span className="block mt-0.5 mb-[3px] leading-3">Quality</span>
            <Drop label="Quality" options={['Eco']} pad="pl-0.5" />
          </label>
          <div className="mt-[14px]"><Knob label="Size" value="100.00" at={0.79} /></div>
          <div className="mt-[14px]"><Knob label="Stereo" value="100.00" at={0.83} /></div>
        </div>

        <div className="w-[195px] shrink-0 ml-[10px]">
          <div className="flex gap-[5px]">
            <div className="w-[111px] shrink-0">
              <h4 className="font-bold leading-3">Diffusion Network</h4>
              <div className="mt-0.5 flex justify-between">
                <Pill on className="w-7">High</Pill>
                <Value label="High frequency" value="4.50 kHz" fill={80} className="w-[45px]" />
                <Value label="High shape" value="0.70" fill={62} className="w-7" />
              </div>
              <FilterChart w={111} solids={[26, 66, 106]} pitch={40} rows={[34, 52]} solidRow={16} curve="M0 15h78c10 0 12 9.500 22 9.500h11">
                <Node x={28.5} y={22} color="#7d8a97" />
                <Node x={85.5} y={24.5} n="2" />
              </FilterChart>
              <div className="mt-[3px] flex justify-between">
                <Pill className="w-7">Low</Pill>
                <Value label="Low frequency" value="90.0 Hz" rest="#8c8c8c" className="w-[45px]" />
                <Value label="Low shape" value="0.75" rest="#8c8c8c" className="w-7" />
              </div>
            </div>
            <div className="w-[79px] shrink-0 pt-[14px]">
              <Pill on className="w-[45px]">Chorus</Pill>
              <FilterChart w={79} solids={[18, 44, 70]} pitch={26}>
                <Node x={13.5} y={48.5} />
              </FilterChart>
              <div className="mt-[3px] flex justify-between">
                <Value label="Chorus rate" value="0.02 Hz" fill={8} className="w-[45px]" />
                <Value label="Chorus amount" value="0.02" fill={8} className="w-[30px]" />
              </div>
            </div>
          </div>
          <div className="flex mt-[10px]">
            <div className="w-[54px] pt-px shrink-0"><Knob label="Decay Time" value="1.84 s" at={0.39} /></div>
            <div className="w-[46px] ml-3 shrink-0">
              <Pill className="w-[46px]">Freeze</Pill>
              <div className="mt-1 flex justify-between">
                <Pill on className="w-[21px]">Flat</Pill>
                <Pill on className="w-[21px]">Cut</Pill>
              </div>
            </div>
            <div className="flex-1 flex justify-between pt-px pl-[7px] pr-1">
              <Knob label="Density" value="60 %" at={0.62} />
              <Knob label="Scale" value="40 %" at={0.36} />
            </div>
          </div>
        </div>

        <div className="flex-1 flex flex-col gap-[11px] pl-1.5">
          <Knob label="Reflect" value="0.0 dB" at={0.5} />
          <Knob label="Diffuse" value="0.0 dB" at={0.5} />
          <Knob label="Dry/Wet" value="55 %" at={0.55} />
        </div>
      </div>
    </section>
  );
}

const BELL = 'M0 5h3l3-4h4l3 4-3 4H6L3 5M13 5h3';

const BANDS = [
  { on: true, shape: 'M0 1h4l4 4h8M0 9h4l4-4' },
  { on: true, shape: BELL },
  { on: true, shape: BELL },
  { on: true, shape: 'M0 5h7l4-4h5M7 5l4 4h5' },
  { shape: BELL },
  { shape: BELL },
  { shape: BELL },
  { shape: 'M0 1.500h11l3 2.500v5' },
];

function EqDisplay() {
  const fx = (f) => Math.round(68 + 130 * Math.log10(f / 100)) + 0.5;
  const minor = [];
  [10, 100, 1000, 10000].forEach((d) => {
    for (let k = 2; k < 10; k++) {
      const x = fx(d * k);
      if (x > 24 && x < 374) minor.push(`M${x} 0v134`);
    }
  });
  const rows = [
    ['12', 14.5],
    ['6', 40.5],
    ['0', 66.5],
    ['−6', 94.5],
    ['−12', 120.5],
  ];
  return (
    <svg viewBox="0 0 374 134" width="374" height="134" className="block rounded-md bg-[#1a1f26]" fill="none" role="img" aria-label="EQ curve">
      <path d={minor.join('')} stroke="#4d5257" strokeDasharray="1 1" />
      {rows.map(([t, y]) => (
        <g key={t}>
          <path d={`M22 ${y}h352`} stroke="#4d5257" strokeDasharray={t === '0' ? undefined : '1 1'} />
          <text x="18" y={y + 4} textAnchor="end" fontSize="10" fill="#7b8086">{t}</text>
        </g>
      ))}
      {[['100', 100], ['1k', 1000], ['10k', 10000]].map(([t, f]) => (
        <g key={t}>
          <path d={`M${fx(f)} 0v122`} stroke="#5c6166" />
          <text x={fx(f) - 1} y="132" textAnchor="middle" fontSize="10" fill="#7b8086">{t}</text>
        </g>
      ))}
      <path d="M0 44.500C30 44.800 55 46 74 51S105 62 124 64.500 170 66.700 374 67" stroke="#ff6a00" strokeWidth="1.8" />
      <Node x={92.5} y={46.5} n="1" solid />
      <Node x={110.5} y={66.5} n="2" />
      <Node x={198.5} y={66.5} n="3" />
      <Node x={286.5} y={66.5} n="4" />
    </svg>
  );
}

function EqEight() {
  return (
    <section className="w-[475px] h-[188px] shrink-0 bg-[#b5b1b0] rounded">
      <DeviceHeader title="EQ Eight" icons={['right']} right={['swap', 'save']} />
      <div className="flex gap-0.5 px-0.5">
        <div className="w-[45px] shrink-0 h-[169px] rounded bg-[#8c8c8c] pt-0.5 flex flex-col gap-[7px]">
          <Knob label="Freq" value="144 Hz" at={0.23} />
          <Knob label="Gain" value="5.08 dB" at={0.69} bipolar />
          <Knob label="Q" value="0.71" at={0.37} />
        </div>
        <div className="w-[374px] shrink-0">
          <EqDisplay />
          <div className="mt-0.5 flex gap-0.5">
            {BANDS.map((b, i) => (
              <div key={i} className={clsx('w-[45px] h-[33px] rounded px-1 pt-[3px]', i > 0 && 'bg-[#8c8c8c]')}>
                <span className="relative block">
                  <select
                    aria-label={`Band ${i + 1} filter type`}
                    className={clsx('appearance-none block w-[37px] h-[13px] border border-[#333]', b.on ? 'bg-[#c3c3c3]' : 'bg-[#8c8c8c]')}
                  />
                  <svg viewBox="0 0 16 10" className="absolute left-[3px] top-[2px] w-4 h-[10px] pointer-events-none" fill="none" stroke="#111" aria-hidden="true">
                    <path d={b.shape} />
                  </svg>
                  <Tri className="w-[7px] h-[7px] absolute right-[3px] top-[3px] pointer-events-none" />
                </span>
                <label className="mt-[3px] pl-2 flex items-center gap-[7px] font-bold leading-[11px]">
                  <input
                    type="checkbox"
                    defaultChecked={b.on}
                    className="appearance-none size-[11px] shrink-0 border border-[#333] checked:bg-[#ff6a00]"
                  />
                  {i + 1}
                </label>
              </div>
            ))}
          </div>
        </div>
        <div className="flex-1 h-[169px] rounded bg-[#8c8c8c] px-[3px] pt-[6px] flex flex-col gap-1">
          <div className="flex justify-between">
            <Pill className="w-[19px]" aria-label="Audition">
              <svg viewBox="0 0 11 11" className="size-[11px]" fill="none" stroke="#222" strokeWidth="1.3" aria-hidden="true">
                <path d="M3.500 9C1 6 2 2 5.500 2S10 6 7.500 9M3.500 6v3M7.500 6v3" />
              </svg>
            </Pill>
            <Pill on className="w-[19px]" aria-label="Analyze">
              <svg viewBox="0 0 15 9" className="w-[15px] h-[9px]" stroke="#111" aria-hidden="true">
                <path d="M1.500 5v4M3.500 3v6M5.500 1v8M7.500 4v5M9.500 2v7M11.500 6v3M13.500 7v2" />
              </svg>
            </Pill>
          </div>
          <div>
            <p className="font-bold leading-3">Mode</p>
            <Drop label="Mode" options={['Stereo']} pad="pl-px" />
          </div>
          <div>
            <p className="font-bold leading-3">Edit</p>
            <Pill className="w-[42px] text-[#5a5a5a]">A</Pill>
          </div>
          <div>
            <p className="font-bold leading-3 whitespace-nowrap">Adapt. Q</p>
            <Pill on className="w-[42px]">On</Pill>
          </div>
          <label className="block">
            <span className="block font-bold leading-3">Scale</span>
            <Value label="Scale" value="100 %" fill={74} className="block w-[42px]" />
          </label>
          <label className="block">
            <span className="block font-bold leading-3">Gain</span>
            <Value label="Gain" value="0.00 dB" fill={49} className="block w-[42px]" />
          </label>
        </div>
      </div>
    </section>
  );
}

function DeviceChain() {
  return (
    <div className="mx-2 mt-2 h-[200px] shrink-0 rounded-md bg-[#5a5a5a] flex pt-1.5 pr-[5px] overflow-hidden">
      <div className="w-4 shrink-0 flex justify-center pt-[74px]">
        <i className="block w-[3px] h-[38px] border-l-[3px] border-dotted border-[#1b2229]" />
      </div>
      <PluginDevice title="Addictive Keys" preset="none" />
      <ChainMeter />
      <Reverb />
      <ChainMeter />
      <PluginDevice title="HalfTime-64bit" preset="HalfTime" />
      <ChainMeter />
      <EqEight />
      <ChainMeter />
      <div className="flex-1 h-[190px] -mt-px bg-[#8c8c8c]" />
    </div>
  );
}

/* ---------- status bar ---------- */

function ChainThumb() {
  return (
    <svg viewBox="0 0 114 16" className="block w-[114px] h-4" aria-hidden="true">
      <path d="M0 0h114v16H0z" fill="#9a9896" />
      <path d="M1 3h11v11H1zM58 3h11v11H58zM77 2h30v11H77z" fill="#1a1f26" />
      <path d="M15 4h6v5h-6zM22 4h6v5h-6zM34 4h9v5h-9zM44 4h6v5h-6z" fill="#1a1f26" />
      <path d="M15 2.500h5M22 2.500h4M34 2.500h4M44 2.500h5M40 12.500h5M109 10.500h4" stroke="#ffc80a" />
      <path d="M14 10.500h14M33 10.500h17M15 13.500h3M22 13.500h2M31 13.500h3M36 13.500h3M47 13.500h6M77 14.500h26" stroke="#e07d3a" strokeDasharray="3 1" />
      <path d="M77 6h6l6 1.500h18" stroke="#a84a10" fill="none" />
      <path d="M84 5.500h2M89 7.500h2M97 7.500h2" stroke="#ffc80a" />
      <path d="M0 .5h114M54.500 0v16M72.500 0v16" stroke="#bab6b5" />
    </svg>
  );
}

function StatusBar() {
  return (
    <footer className="h-[38px] shrink-0 flex px-2">
      <div className="flex-1 min-w-0 flex pt-2">
        <button type="button" aria-label="Info view" className="mt-0.5 mr-2 size-[19px] shrink-0 rounded-full bg-[#5a5a5a] text-[#7c7c7c] flex items-center justify-center">
          <Tri dir="right" className="w-3 h-3 ml-0.5" />
        </button>
        <div className="flex-1 h-[22px] rounded border-4 border-[#5a5a5a] bg-[#8c8c8c]" />
        <div className="ml-2 mr-2 w-[208px] shrink-0 h-[22px] rounded border-4 border-t-[3px] border-b-[3px] border-[#5a5a5a] bg-[#8c8c8c]" />
      </div>
      <div className="w-[205px] h-[30px] shrink-0 rounded-b bg-[#5a5a5a] flex items-center pl-[5px] pt-[8px]">
        <span className="font-bold whitespace-nowrap flex-1">1-Addictive Keys</span>
        <div className="relative w-[119px] h-5 p-0.5 shrink-0">
          <ChainThumb />
          <div className="absolute left-0 top-0 w-[107px] h-5 border-2 border-black" />
        </div>
      </div>
      <button type="button" aria-label="Show devices" className="ml-2 mt-[10px] size-[19px] shrink-0 rounded-full bg-[#5a5a5a] flex items-center justify-center">
        <svg viewBox="0 0 11 11" className="size-[11px]" fill="#7c7c7c" aria-hidden="true"><path d="M5.500 0L11 11H0z" /></svg>
      </button>
    </footer>
  );
}

export default function App() {
  return (
    <div className="min-h-screen min-w-[1360px] flex flex-col bg-[#757575] font-['Liberation_Sans',Arial,sans-serif] text-[10px] text-[#0c0c0c] select-none">
      <nav className="h-[21px] shrink-0 bg-[#f0f0f0] flex items-center gap-[15px] pl-[9px] pb-[3px] font-['Noto_Sans','Open_Sans',sans-serif] text-[11px] text-black">
        {['File', 'Edit', 'Create', 'View', 'Options', 'Help'].map((m) => (
          <button key={m} type="button">{m}</button>
        ))}
      </nav>
      <Transport />
      <div className="flex-1 flex gap-2 px-2">
        <Browser />
        <Arrangement />
      </div>
      <DeviceChain />
      <StatusBar />
    </div>
  );
}
